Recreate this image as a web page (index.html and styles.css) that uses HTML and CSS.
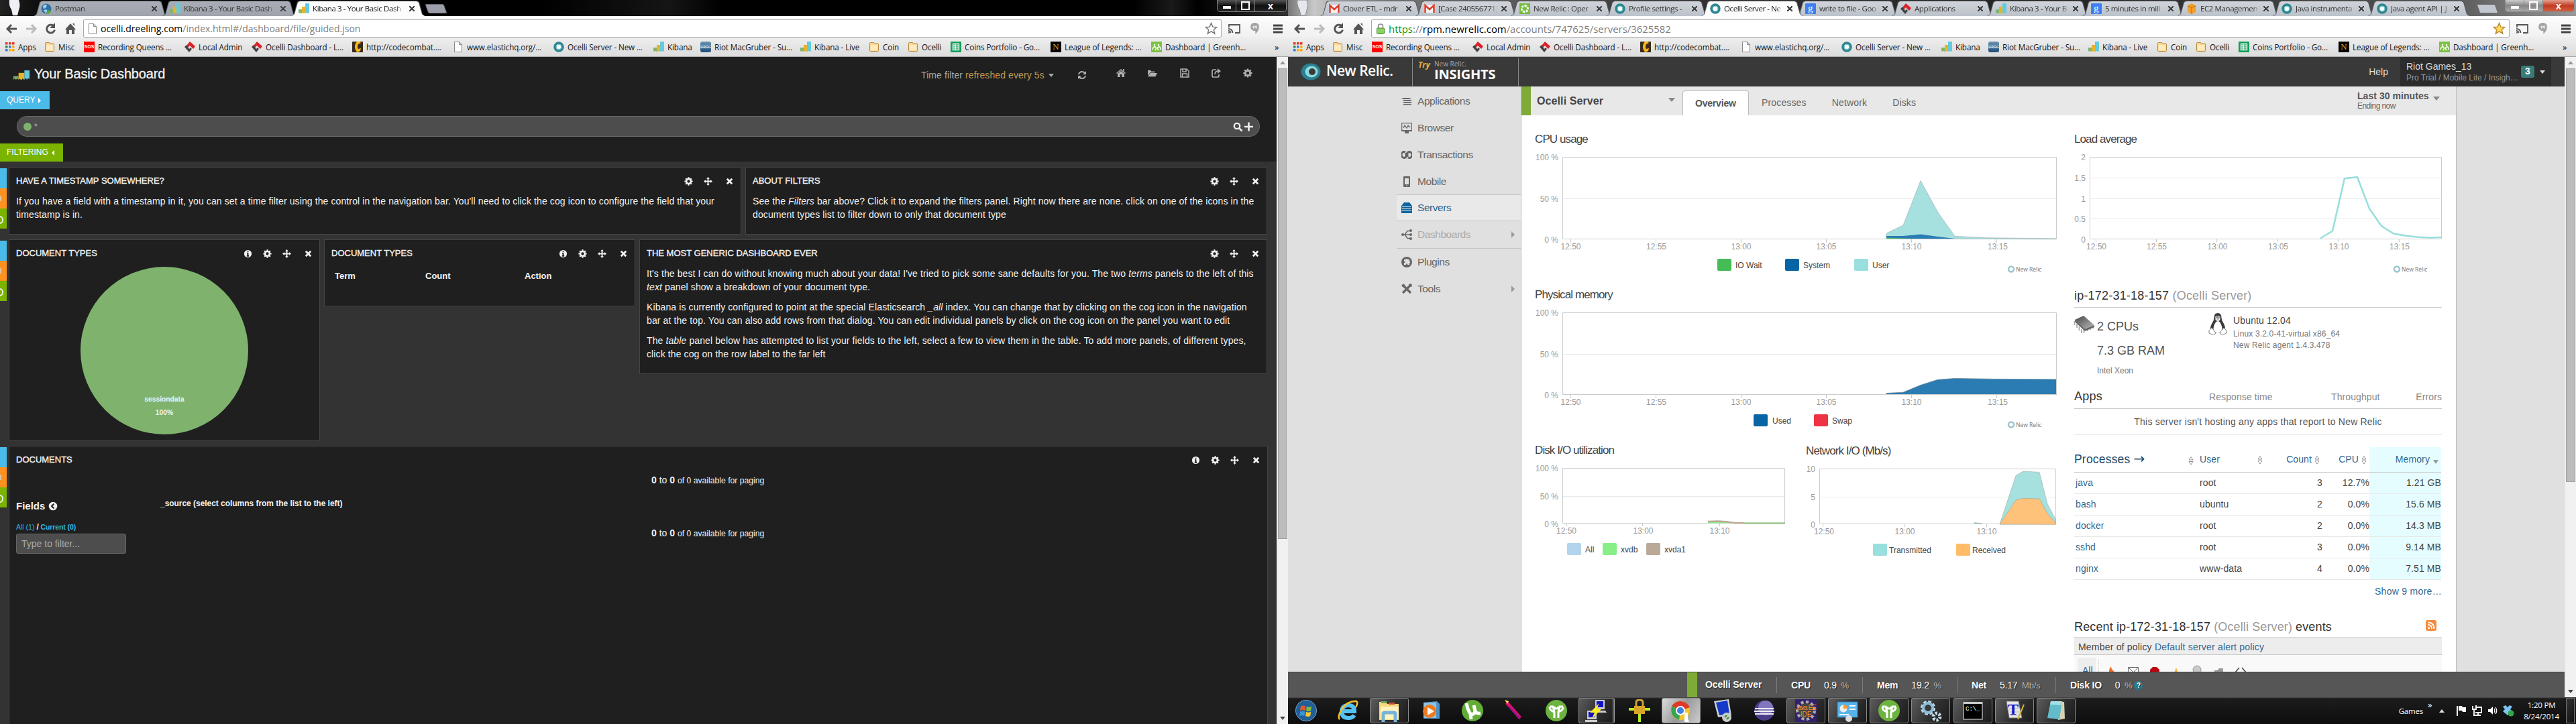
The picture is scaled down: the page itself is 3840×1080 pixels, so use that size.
FILE: index.html
```html
<!DOCTYPE html>
<html lang="en">
<head>
<meta charset="utf-8">
<title>Kibana 3 - Your Basic Dashboard</title>
<link rel="stylesheet" href="styles.css">
</head>
<body>
<svg class="sprite" aria-hidden="true">
  <symbol id="kibana" viewBox="0 0 16 16"><path fill="#7fb56b" d="M0 9h5v6l-2-1-1 1-1-1-1 1z"/><path fill="#e8b229" d="M5 5h5v10l-1-1-2 1-2-1z"/><path fill="#63cbe0" d="M10 0h6v14l-2 1-1-1-3 1z"/></symbol>
  <symbol id="folder" viewBox="0 0 16 16"><path fill="#fbd995" stroke="#b98a3c" d="M1.5 2.5q0-1 1-1h5l1 1.500h5q1 0 1 1v9.500q0 1-1 1h-11q-1 0-1-1z"/><path fill="#fdeac0" d="M3 5h10v8H3z"/></symbol>
  <symbol id="apps" viewBox="0 0 14 14"><path fill="#e33b2e" d="M0 0h3.500v3.500H0zM5 0h3.500v3.500H5zM10 0h3.500v3.500H10z"/><path fill="#2c8a4b" d="M0 5h3.500v3.500H0z"/><path fill="#2f7de1" d="M5 5h3.500v3.500H5zM0 10h3.500v3.500H0z"/><path fill="#f5ab1b" d="M10 5h3.500v3.500H10zM5 10h3.500v3.500H5zM10 10h3.500v3.500H10z"/></symbol>
  <symbol id="loggly" viewBox="0 0 16 16"><path fill="#d8232a" d="M8 0l8 7-3 4-5-5-3 3-2-3z"/><path fill="#444" d="M3 5l-3 3 7 8 4-5-2-2-2 2z"/></symbol>
  <symbol id="combat" viewBox="0 0 16 16"><rect width="16" height="16" rx="1" fill="#382a1d"/><path fill="#f9b517" d="M7 0h4l2 2-4 2q-2 4 0 7l4-1-1 4-4 2q-4-3-4-8 0-5 3-8z"/></symbol>
  <symbol id="page" viewBox="0 0 16 16"><path fill="#fff" stroke="#888" d="M2.500 .5h7l4 4v11h-11z"/><path fill="none" stroke="#888" d="M9.500 .5v4h4"/></symbol>
  <symbol id="ring" viewBox="0 0 16 16"><circle cx="8" cy="8" r="5.500" fill="#fff" stroke="#2d8592" stroke-width="4.500"/><circle cx="8" cy="8" r="4" fill="none" stroke="#8fd5d3"/></symbol>
  <symbol id="nrlogo" viewBox="0 0 30 26"><ellipse cx="15" cy="13" rx="14.500" ry="12.500" fill="#2a8092"/><ellipse cx="16" cy="13" rx="9.500" ry="8.500" fill="#8bdadb"/><ellipse cx="17" cy="13" rx="5" ry="5" fill="#393939"/></symbol>
  <symbol id="sheet" viewBox="0 0 16 16"><rect width="16" height="16" rx="1" fill="#0f9d58"/><path fill="none" stroke="#fff" stroke-width="1.300" d="M3.500 3.500h9v9h-9zM3.500 6.500h9M3.500 9.500h9M7 3.500v9"/></symbol>
  <symbol id="green" viewBox="0 0 16 16"><rect width="16" height="16" fill="#7cc243"/><circle cx="5" cy="5" r="1.300" fill="#fff"/><circle cx="11" cy="5" r="1.300" fill="#fff"/><path fill="none" stroke="#fff" stroke-width="1.500" d="M2 12q1-5 4-4t0 5M14 12q0-5-3-4t0 5"/></symbol>
  <symbol id="clover" viewBox="0 0 16 16"><rect width="16" height="16" fill="#76bd3e"/><path fill="none" stroke="#fff" stroke-width="3" stroke-dasharray="3 1.500" d="M8 3.500a4.500 4.500 0 1 1-.1 0z"/></symbol>
  <symbol id="gmail" viewBox="0 0 16 16"><path fill="#f2f2f2" d="M0 2h16v12H0z"/><path fill="none" stroke="#dc3b2d" stroke-width="2.500" d="M1.500 14V3l6.500 6 6.500-6v11"/></symbol>
  <symbol id="google" viewBox="0 0 16 16"><rect width="16" height="16" rx="1" fill="#3d7ef0"/><text x="4" y="12" font-family="Liberation Serif,serif" font-size="15" fill="#fff">g</text></symbol>
  <symbol id="aws" viewBox="0 0 16 16"><path fill="#f3a02d" d="M8 0l6 3v10l-6 3-6-3V3z"/><path stroke="#b56f10" d="M8 5v11M2 4l6 2 6-2" fill="none"/></symbol>
  <symbol id="globe" viewBox="0 0 16 16"><circle cx="8" cy="8" r="7.500" fill="#2f6fa3"/><path fill="#9bd0ef" d="M3 4q4-4 6-1l-2 4-3 1zM4 10l4-1 2 3-3 3z"/><path fill="#4ea736" d="M10 9l5 3-4 4-3-2z"/></symbol>
  <symbol id="lock" viewBox="0 0 16 16"><path fill="none" stroke="#888" stroke-width="1.500" d="M4.500 8V4q0-3 3.500-3t3.500 3v4"/><rect x="2.500" y="7" width="11" height="8.500" rx="1" fill="#8ed066" stroke="#3f8a26"/></symbol>
  <symbol id="cast" viewBox="0 0 20 16"><path fill="none" stroke="#555" stroke-width="1.800" d="M2 6V2h16v12h-7M1 8q6 0 6.500 6M1 11q3 0 3.500 3"/><circle cx="2" cy="14" r="1" fill="#555"/></symbol>
  <symbol id="hang" viewBox="0 0 16 20"><path fill="#a2a2a2" d="M8 0q7 0 7 7 0 6-6 12v-5Q1 13 1 7q0-7 7-7z"/><path fill="#eee" d="M4.500 5h3v4l-2 1V8h-1zM8.500 5h3v4l-2 1V8h-1z"/></symbol>
  <symbol id="cog" viewBox="0 0 14 14"><circle cx="7" cy="7" r="3.700" fill="none" stroke="currentColor" stroke-width="2.800"/><path stroke="currentColor" stroke-width="2.300" d="M7 .4v2.200M7 11.400v2.200M.4 7h2.200M11.400 7h2.200M2.300 2.300l1.600 1.600M10.100 10.100l1.600 1.600M2.300 11.700l1.600-1.600M10.100 3.900l1.600-1.600"/></symbol>
  <symbol id="move" viewBox="0 0 14 14"><path fill="currentColor" d="M7 0l2.600 3H8v3h3V4.400L14 7l-3 2.600V8H8v3h1.600L7 14l-2.600-3H6V8H3v1.600L0 7l3-2.600V6h3V3H4.400z"/></symbol>
  <symbol id="close" viewBox="0 0 14 14"><path stroke="currentColor" stroke-width="3" d="M3 3l8 8M11 3l-8 8"/></symbol>
  <symbol id="info" viewBox="0 0 14 14"><circle cx="7" cy="7" r="6" fill="currentColor"/><path stroke="#1f1f1f" stroke-width="2" d="M7 3v1.700M7 5.800V11M5.500 6.300H7M5.200 10.500h3.600"/></symbol>
  <symbol id="sort" viewBox="0 0 8 14"><path fill="#fff" stroke="#888" stroke-width=".9" d="M1 6L4 1.500 7 6zM1 8.500L4 13l3-4.500z"/></symbol>
  <symbol id="fork" viewBox="0 0 32 34"><circle cx="16" cy="17" r="16" fill="#6cb33f"/><path fill="none" stroke="#fff" stroke-width="3" d="M6 11h5l2 8v9M26 11h-5l-2 8v9M6 12q0 5 7 7M26 12q0 5-7 7M13 11q0 3 3 3t3-3"/></symbol>
</svg>

<div class="window left">
  <div class="titlebar">
    <svg class="ghost" viewBox="0 0 30 24"><path fill="#eef0f4" d="M14 0h14q3 8 0 15l-2 8h-7l-2-9q-4-5-3-14z"/></svg>
    <div class="tab"><svg><use href="#globe"/></svg><span>Postman</span><i></i></div>
    <div class="tab"><svg><use href="#kibana"/></svg><span>Kibana 3 - Your Basic Dash</span><i></i></div>
    <div class="tab active"><svg><use href="#kibana"/></svg><span>Kibana 3 - Your Basic Dash</span><i></i></div>
    <div class="newtab"></div>
    <div class="winbtns"><b class="min"></b><b class="max"></b><b class="x">x</b></div>
  </div>
  <div class="toolbar">
    <svg class="navicons" viewBox="0 0 124 32"><g fill="none" stroke="#555" stroke-width="3"><path d="M25 19H12M17 13l-6 6 6 6"/><path stroke="#bbb" d="M39 19h13M47 13l6 6-6 6"/><path d="M80.500 15.500a6 6 0 1 0 1 5"/></g><path fill="#555" d="M82 10v8h-8zM105 11l8 9h-2v7h-4v-6h-4v6h-4v-7h-2zM108 11h3v4z"/></svg>
    <div class="omni"><svg class="site"><use href="#page"/></svg><span class="url"><b>ocelli.dreeling.com</b>/index.html#/dashboard/file/guided.json</span><svg class="star" viewBox="0 0 20 20"><path fill="#fff" stroke="#777" stroke-width="1.500" d="M10 1.500l2.500 6 6 .5-4.500 4 1.500 6-5.500-3.500L4.500 18 6 12 1.500 8l6-.5z"/></svg></div>
    <svg class="ext cast"><use href="#cast"/></svg><svg class="ext hang"><use href="#hang"/></svg><svg class="menu" viewBox="0 0 14 14"><path stroke="#444" stroke-width="3" d="M0 2h14M0 7h14M0 12h14"/></svg>
  </div>
  <div class="bookmarks">
    <span><svg><use href="#apps"/></svg>Apps</span><span><svg><use href="#folder"/></svg>Misc</span><span><em class="sos">SOS</em>Recording Queens ...</span><span><svg><use href="#loggly"/></svg>Local Admin</span><span><svg><use href="#loggly"/></svg>Ocelli Dashboard - L...</span><span><svg><use href="#combat"/></svg>http://codecombat....</span><span><svg><use href="#page"/></svg>www.elastichq.org/...</span><span><svg><use href="#ring"/></svg>Ocelli Server - New ...</span><span><svg><use href="#kibana"/></svg>Kibana</span><span><em class="grgg">GRGG</em>Riot MacGruber - Su...</span><span><svg><use href="#kibana"/></svg>Kibana - Live</span><span><svg><use href="#folder"/></svg>Coin</span><span><svg><use href="#folder"/></svg>Ocelli</span><span><svg><use href="#sheet"/></svg>Coins Portfolio - Go...</span><span><em class="lol">N</em>League of Legends: ...</span><span><svg><use href="#green"/></svg>Dashboard | Greenh...</span><span>»</span>
  </div>
  <div class="page">
    <div class="kibana">
      <header class="khead">
        <svg class="klogo" viewBox="0 0 26 16" preserveAspectRatio="none"><path fill="#7aa86a" d="M0 9h8v6l-2-2-2 2-2-2-2 2z"/><path fill="#e8b229" d="M8 4h9v11l-3-2-2 3-2-3-2 2z"/><path fill="#63cbe0" d="M17 0h8v14l-2-2-2 3-2-3-2 3z"/></svg>
        <h1>Your Basic Dashboard</h1>
        <div class="time">Time filter <span>refreshed every 5s</span><i class="caret"></i></div>
        <div class="knav">
          <svg viewBox="0 0 14 14"><path fill="none" stroke="currentColor" stroke-width="2" d="M2 6q1-4 5-4 3 0 4 2M12 8q-1 4-5 4-3 0-4-2"/><path fill="currentColor" d="M13 1v5H8zM1 13V8h5z"/></svg>
          <svg viewBox="0 0 14 14"><path fill="currentColor" d="M7 1l7 6-1 1-6-5-6 5-1-1zM10 1h2v4l-2-2zM7 4l5 4v5H8.500V9h-3v4H2V8z"/></svg>
          <svg viewBox="0 0 16 14"><path fill="currentColor" d="M0 11V2h5l1 2h6v2H4zM4 7h12l-3 6H0z"/></svg>
          <svg viewBox="0 0 14 14"><path fill="none" stroke="currentColor" stroke-width="1.500" d="M1 1h9l3 3v9H1zM4 1v4h5V1M3.500 13V8h7v5"/></svg>
          <svg viewBox="0 0 14 14"><path fill="none" stroke="currentColor" stroke-width="1.700" d="M7 2H3Q1 2 1 4v7q0 2 2 2h6q2 0 2-2V9M5 9q0-5 5-5"/><path fill="currentColor" d="M9 0l5 4-5 4z"/></svg>
          <svg><use href="#cog"/></svg>
        </div>
      </header>
      <div class="flag query">QUERY <i></i></div>
      <div class="qinput"><b></b><span>*</span><svg viewBox="0 0 32 14"><circle cx="6" cy="6" r="4.200" fill="none" stroke="#eee" stroke-width="2.300"/><path stroke="#eee" stroke-width="2.600" d="M9 9l4.500 4.500M17 7h13M23.500 .5v13"/></svg></div>
      <div class="flag filtering">FILTERING <i></i></div>
      <div class="krows">
        <section class="krow r1">
          <div class="marks"><b></b><b></b><b></b></div>
          <div class="panel p1"><h2>HAVE A TIMESTAMP SOMEWHERE?<span><svg><use href="#cog"/></svg><svg><use href="#move"/></svg><svg><use href="#close"/></svg></span></h2><p>If you have a field with a timestamp in it, you can set a time filter using the control in the navigation bar. You'll need to click the cog icon to configure the field that your<br>timestamp is in.</p></div>
          <div class="panel p2"><h2>ABOUT FILTERS<span><svg><use href="#cog"/></svg><svg><use href="#move"/></svg><svg><use href="#close"/></svg></span></h2><p>See the <em>Filters</em> bar above? Click it to expand the filters panel. Right now there are none. click on one of the icons in the<br>document types list to filter down to only that document type</p></div>
        </section>
        <section class="krow r2">
          <div class="marks"><b></b><b></b><b></b></div>
          <div class="panel pie"><h2>DOCUMENT TYPES<span><svg><use href="#info"/></svg><svg><use href="#cog"/></svg><svg><use href="#move"/></svg><svg><use href="#close"/></svg></span></h2><div class="disc">sessiondata<br>100%</div></div>
          <div class="panel terms"><h2>DOCUMENT TYPES<span><svg><use href="#info"/></svg><svg><use href="#cog"/></svg><svg><use href="#move"/></svg><svg><use href="#close"/></svg></span></h2><div class="cols"><b>Term</b><b>Count</b><b>Action</b></div></div>
          <div class="panel generic"><h2>THE MOST GENERIC DASHBOARD EVER<span><svg><use href="#cog"/></svg><svg><use href="#move"/></svg><svg><use href="#close"/></svg></span></h2>
            <p>It's the best I can do without knowing much about your data! I've tried to pick some sane defaults for you. The two <em>terms</em> panels to the left of this<br><em>text</em> panel show a breakdown of your document type.</p>
            <p>Kibana is currently configured to point at the special Elasticsearch <em>_all</em> index. You can change that by clicking on the cog icon in the navigation<br>bar at the top. You can also add rows from that dialog. You can edit individual panels by click on the cog icon on the panel you want to edit</p>
            <p>The <em>table</em> panel below has attempted to list your fields to the left, select a few to view them in the table. To add more panels, of different types,<br>click the cog on the row label to the far left</p></div>
        </section>
        <section class="krow r3">
          <div class="marks"><b></b><b></b><b></b></div>
          <div class="panel docs"><h2>DOCUMENTS<span><svg><use href="#info"/></svg><svg><use href="#cog"/></svg><svg><use href="#move"/></svg><svg><use href="#close"/></svg></span></h2>
            <div class="docgrid">
              <div class="fields"><h3>Fields <svg viewBox="0 0 14 14"><circle cx="7" cy="7" r="6.300" fill="#f2f2f2"/><path fill="none" stroke="#1f1f1f" stroke-width="2" d="M8.500 3.500L5 7l3.500 3.500"/></svg></h3><div class="allcur"><a>All (1)</a> / <a><b>Current (0)</b></a></div><div class="filter">Type to filter...</div></div>
              <div class="doctable"><div class="paging"><b>0</b> to <b>0</b> <small>of 0 available for paging</small></div><div class="source">_source (select columns from the list to the left)</div><div class="paging"><b>0</b> to <b>0</b> <small>of 0 available for paging</small></div></div>
            </div>
          </div>
        </section>
      </div>
    </div>
    <div class="scroll"><i class="up"></i><b></b><i class="down"></i></div>
  </div>
</div>

<div class="window right">
  <div class="titlebar">
    <svg class="ghost" viewBox="0 0 30 24"><path fill="#e4e8ee" stroke="#888" d="M14 0h14q3 8 0 15l-2 8h-7l-2-9q-4-5-3-14z"/></svg>
    <div class="tab"><svg><use href="#gmail"/></svg><span>Clover ETL - mdr</span><i></i></div>
    <div class="tab"><svg><use href="#gmail"/></svg><span>[Case 240556771]</span><i></i></div>
    <div class="tab"><svg><use href="#clover"/></svg><span>New Relic : Oper</span><i></i></div>
    <div class="tab"><svg><use href="#ring"/></svg><span>Profile settings -</span><i></i></div>
    <div class="tab active"><svg><use href="#ring"/></svg><span>Ocelli Server - Ne</span><i></i></div>
    <div class="tab"><svg><use href="#google"/></svg><span>write to file - Goo</span><i></i></div>
    <div class="tab"><svg><use href="#loggly"/></svg><span>Applications</span><i></i></div>
    <div class="tab"><svg><use href="#kibana"/></svg><span>Kibana 3 - Your B</span><i></i></div>
    <div class="tab"><svg><use href="#google"/></svg><span>5 minutes in mill</span><i></i></div>
    <div class="tab"><svg><use href="#aws"/></svg><span>EC2 Managemen</span><i></i></div>
    <div class="tab"><svg><use href="#ring"/></svg><span>Java instrumenta</span><i></i></div>
    <div class="tab"><svg><use href="#ring"/></svg><span>Java agent API | J</span><i></i></div>
    <div class="newtab"></div>
    <div class="winbtns"><b class="min"></b><b class="max"></b><b class="x">x</b></div>
  </div>
  <div class="toolbar">
    <svg class="navicons" viewBox="0 0 124 32"><g fill="none" stroke="#555" stroke-width="3"><path d="M25 19H12M17 13l-6 6 6 6"/><path stroke="#bbb" d="M39 19h13M47 13l6 6-6 6"/><path d="M80.500 15.500a6 6 0 1 0 1 5"/></g><path fill="#555" d="M82 10v8h-8zM105 11l8 9h-2v7h-4v-6h-4v6h-4v-7h-2zM108 11h3v4z"/></svg>
    <div class="omni"><svg class="site"><use href="#lock"/></svg><span class="url"><u>https</u>://<b>rpm.newrelic.com</b>/accounts/747625/servers/3625582</span><svg class="star" viewBox="0 0 20 20"><path fill="#ffd95e" stroke="#b98a2c" stroke-width="1.500" d="M10 1.500l2.500 6 6 .5-4.500 4 1.500 6-5.500-3.500L4.500 18 6 12 1.500 8l6-.5z"/></svg></div>
    <svg class="ext cast"><use href="#cast"/></svg><svg class="ext hang"><use href="#hang"/></svg><svg class="menu" viewBox="0 0 14 14"><path stroke="#444" stroke-width="3" d="M0 2h14M0 7h14M0 12h14"/></svg>
  </div>
  <div class="bookmarks">
    <span><svg><use href="#apps"/></svg>Apps</span><span><svg><use href="#folder"/></svg>Misc</span><span><em class="sos">SOS</em>Recording Queens ...</span><span><svg><use href="#loggly"/></svg>Local Admin</span><span><svg><use href="#loggly"/></svg>Ocelli Dashboard - L...</span><span><svg><use href="#combat"/></svg>http://codecombat....</span><span><svg><use href="#page"/></svg>www.elastichq.org/...</span><span><svg><use href="#ring"/></svg>Ocelli Server - New ...</span><span><svg><use href="#kibana"/></svg>Kibana</span><span><em class="grgg">GRGG</em>Riot MacGruber - Su...</span><span><svg><use href="#kibana"/></svg>Kibana - Live</span><span><svg><use href="#folder"/></svg>Coin</span><span><svg><use href="#folder"/></svg>Ocelli</span><span><svg><use href="#sheet"/></svg>Coins Portfolio - Go...</span><span><em class="lol">N</em>League of Legends: ...</span><span><svg><use href="#green"/></svg>Dashboard | Greenh...</span><span>»</span>
  </div>
  <div class="page">
    <div class="relic">
      <header class="nrhead">
        <svg class="nrlogo"><use href="#nrlogo"/></svg><strong>New Relic.</strong>
        <div class="insights"><em>Try</em><div><small>New Relic.</small><b>INSIGHTS</b></div></div>
        <span class="help">Help</span>
        <div class="account"><div>Riot Games_13<small>Pro Trial / Mobile Lite / Insigh…</small></div><b>3</b><i class="caret"></i></div>
      </header>
      <div class="nrbody">
        <nav class="side">
          <a><svg viewBox="0 0 16 16"><path fill="#666" d="M0 3h12l3 2H3zM2 6h13v1.700H4zM2 9h13v1.700H4zM2 12h13v1.500H4z"/></svg>Applications</a>
          <a><svg viewBox="0 0 16 16"><path fill="none" stroke="#666" stroke-width="1.200" d="M.7.7h14.600v11H.7zM3 8l2-4 3 4 2-4 3 3"/><path fill="#666" d="M0 11h16v2h-5v3H5v-3H0z"/></svg>Browser</a>
          <a><svg viewBox="0 0 16 16"><g fill="none" stroke="#666" stroke-width="3"><path d="M6 4a4 4.500 0 1 0 1 7V5M10 12a4 4.500 0 1 0-1-7v6"/></g></svg>Transactions</a>
          <a><svg viewBox="0 0 16 16"><path fill="#666" fill-rule="evenodd" d="M4 0h8q1 0 1 1v14q0 1-1 1H4q-1 0-1-1V1q0-1 1-1zM5 3v9h6V3zM7 13.500h2v1H7z"/></svg>Mobile</a>
          <a class="on"><svg viewBox="0 0 16 16"><path fill="#0c639f" d="M4 0h8l4 5v11H0V5z"/><path stroke="#e8e8e8" d="M1 6.500h14M1 9.500h14M1 12.500h14"/></svg>Servers</a>
          <a class="dash"><svg viewBox="0 0 16 16"><path fill="none" stroke="#666" stroke-width="1.500" d="M3 8h10M5 8l4-5.500h4M5 8l4 5.500h4"/><g fill="#666"><circle cx="2" cy="8" r="2"/><circle cx="14" cy="2" r="2"/><circle cx="14" cy="8" r="2"/><circle cx="14" cy="14" r="2"/></g></svg>Dashboards<i></i></a>
          <a><svg viewBox="0 0 16 16"><circle cx="8" cy="8" r="8" fill="#666"/><path fill="#e0e0e0" d="M4 4h3V3h2v1h3v3h1v2h-1v3H9v-1.500H7V12H4V9h1.500V7H4z"/></svg>Plugins</a>
          <a><svg viewBox="0 0 16 16"><path stroke="#666" stroke-width="3.200" d="M2 14L13 3M3 3l11 11"/><path fill="#666" d="M0 3l3-3 3 3-3 3zM11 1l3-1 2 2-1 3-4-1z"/></svg>Tools<i></i></a>
        </nav>
        <main>
          <div class="subhead"><h1>Ocelli Server<i></i></h1><a class="on">Overview</a><a>Processes</a><a>Network</a><a>Disks</a><div class="range"><b>Last 30 minutes<i></i></b>Ending now</div></div>
          <div class="content">
            <div class="charts">
              <h2>CPU usage</h2>
              <svg class="chart" width="812" height="210" viewBox="2268 219 812 210">
                <path class="grid" d="M2330 296.500h735"/><path class="box" d="M2329.500 234.500h736v122h-736zM2341.500 357v5M2468.500 357v5M2595.500 357v5M2722.500 357v5M2849.500 357v5M2976.500 357v5"/>
                <path fill="#a6e0df" stroke="#a5b5b5" stroke-width=".7" d="M2812 356V348l25-12 26-66.500 26 47.500 25 35.300 47 2.500 104 1v1z"/><path fill="#2a7cb3" d="M2812 356v-4h25l26-2.500 26 3.500 25 3z"/><path fill="#45bc57" d="M2812 356v-1.500l40 1.500z"/>
                <g class="y"><text x="2323" y="239">100 %</text><text x="2323" y="301">50 %</text><text x="2323" y="361.500">0 %</text></g>
                <g class="x"><text x="2341.500" y="372">12:50</text><text x="2469" y="372">12:55</text><text x="2595.500" y="372">13:00</text><text x="2722.500" y="372">13:05</text><text x="2849.500" y="372">13:10</text><text x="2978" y="372">13:15</text></g>
                <g class="leg"><rect x="2560" y="386" width="21" height="18" rx="2" fill="#45bc57"/><text x="2587" y="399.500">IO Wait</text><rect x="2661" y="386" width="21" height="18" rx="2" fill="#0865a5"/><text x="2688" y="399.500">System</text><rect x="2764" y="386" width="21" height="18" rx="2" fill="#99dfdd"/><text x="2791" y="399.500">User</text></g>
                <circle class="wm" cx="2998" cy="401.500" r="4"/><text class="wmt" x="3005" y="405">New Relic</text>
              </svg>
              <h2>Physical memory</h2>
              <svg class="chart" width="812" height="210" viewBox="2268 451 812 210">
                <path class="grid" d="M2330 528.500h735"/><path fill="#2a7cb3" stroke="#64808f" stroke-width=".7" d="M2812 588.500v-2l25-1.300 26-10.800 25-8 26-2 60 1 91.500.5v22.600z"/><path class="box" d="M2329.500 466.500h736v122h-736zM2341.500 589v5M2468.500 589v5M2595.500 589v5M2722.500 589v5M2849.500 589v5M2976.500 589v5"/>
                <g class="y"><text x="2323" y="471">100 %</text><text x="2323" y="533">50 %</text><text x="2323" y="593.500">0 %</text></g>
                <g class="x"><text x="2341.500" y="604">12:50</text><text x="2469" y="604">12:55</text><text x="2595.500" y="604">13:00</text><text x="2722.500" y="604">13:05</text><text x="2849.500" y="604">13:10</text><text x="2978" y="604">13:15</text></g>
                <g class="leg"><rect x="2614" y="618" width="21" height="18" rx="2" fill="#0865a5"/><text x="2642" y="631.500">Used</text><rect x="2704" y="618" width="21" height="18" rx="2" fill="#ee3344"/><text x="2731" y="631.500">Swap</text></g>
                <circle class="wm" cx="2998" cy="633.500" r="4"/><text class="wmt" x="3005" y="637">New Relic</text>
              </svg>
              <div class="pair">
                <div><h2>Disk I/O utilization</h2>
                <svg class="chart" width="412" height="160" viewBox="2268 683 412 160">
                  <path class="grid" d="M2330 740.500h331"/><path class="box" d="M2329.500 698.500h331v82h-331zM2335.500 781v4M2448.500 781v4M2563.500 781v4"/><path fill="#88ee88" d="M2546 780.500v-2h15l20 1.200h80v.8z"/><path fill="none" stroke="#bba998" stroke-width="2.500" d="M2546 778l15-.5 12 .8 14 2h12"/><path stroke="#8bb97c" stroke-width="2" d="M2599 780.500h62"/>
                  <g class="y"><text x="2323" y="703">100 %</text><text x="2323" y="745">50 %</text><text x="2323" y="785.500">0 %</text></g>
                  <g class="x"><text x="2335" y="796">12:50</text><text x="2449.500" y="796">13:00</text><text x="2563.500" y="796">13:10</text></g>
                  <g class="leg"><rect x="2336" y="810" width="21" height="18" rx="2" fill="#b2d4ec"/><text x="2363" y="823.500">All</text><rect x="2389" y="810" width="21" height="18" rx="2" fill="#88ee88"/><text x="2416" y="823.500">xvdb</text><rect x="2454" y="810" width="21" height="18" rx="2" fill="#bba998"/><text x="2481" y="823.500">xvda1</text></g>
                </svg></div>
                <div class="net"><h2>Network I/O (Mb/s)</h2>
                <svg class="chart" width="400" height="160" viewBox="2680 683 400 160">
                  <path class="grid" d="M2713 741.500h351"/><path class="box" d="M2712.500 699.500h352v82h-352zM2717.500 782v4M2839.500 782v4M2961.500 782v4"/><path fill="#a6e0df" stroke="#9fb5b5" stroke-width=".7" d="M2981 782l24-72.500 11-6.500 24 1.400 12 47 12.500 24v6zM2943 781v-1.500l12 1.500z"/><path fill="#ffc27a" stroke="#a8a890" stroke-width=".7" d="M2981 782l24-36 11-2.700 24 .7 12 22.300 12.500 14v2z"/>
                  <g class="y"><text x="2706" y="704">10</text><text x="2706" y="746">5</text><text x="2706" y="786.500">0</text></g>
                  <g class="x"><text x="2719" y="797">12:50</text><text x="2839.500" y="797">13:00</text><text x="2961.500" y="797">13:10</text></g>
                  <g class="leg"><rect x="2792" y="811" width="21" height="18" rx="2" fill="#99dfdd"/><text x="2816" y="824.500">Transmitted</text><rect x="2916" y="811" width="21" height="18" rx="2" fill="#ffbb66"/><text x="2940" y="824.500">Received</text></g>
                </svg></div>
              </div>
            </div>
            <div class="info">
              <h2>Load average</h2>
              <svg class="chart load" width="581" height="211" viewBox="3080 219 581 211">
                <path class="grid" d="M3116 265.500h523M3116 296.500h523M3116 326.500h523"/><path class="box" d="M3115.500 234.500h524v122h-524zM3124.500 357v4M3214.500 357v4M3304.500 357v4M3395.500 357v4M3485.500 357v4M3576.500 357v4"/>
                <path fill="none" stroke="#99dfdd" stroke-width="2.600" d="M3459 355.500l18-11 18-78.300 19-2 18 47 18 26 18 11.400 18 3 19 2.200 17 .7 17.500-.5"/>
                <g class="y"><text x="3109" y="239">2</text><text x="3109" y="270">1.5</text><text x="3109" y="301">1</text><text x="3109" y="331">0.5</text><text x="3109" y="361.500">0</text></g>
                <g class="x"><text x="3125" y="372">12:50</text><text x="3215" y="372">12:55</text><text x="3305.500" y="372">13:00</text><text x="3396" y="372">13:05</text><text x="3486.500" y="372">13:10</text><text x="3577" y="372">13:15</text></g>
                <circle class="wm" cx="3573" cy="401.500" r="4"/><text class="wmt" x="3580" y="405">New Relic</text>
              </svg>
              <h3 class="host">ip-172-31-18-157 <span>(Ocelli Server)</span></h3>
              <div class="specs">
                <svg class="chip" viewBox="0 0 34 30"><defs><linearGradient id="die" x1="0" y1="0" x2="1" y2="1"><stop offset="0" stop-color="#444"/><stop offset="1" stop-color="#bbb"/></linearGradient></defs><path stroke="#aaa" stroke-width="1.800" d="M2.500 10v6M6 14v6M9.500 18v6M13 22v6M16.500 22v6M22 22v3M26 20v3M30 18v3"/><path fill="#666" d="M3 8v3l15 14 14-6v-3L18 21z"/><path fill="url(#die)" d="M3 8L16 2l16 14-14 6z"/></svg>
                <div class="cpu">2 CPUs<br>7.3 GB RAM<small>Intel Xeon</small></div>
                <svg class="tux" viewBox="0 0 28 33"><path fill="#3a3a3a" d="M14 0q5.500 0 5.500 7 0 4 3 8 4 7 2 11l-5 4h-11l-5-4q-2-4 2-11 3-4 3-8Q8.500 0 14 0z"/><path fill="#fff" d="M14 12q3 0 5 5 3 7 0 11-5 4-10 0-3-4 0-11 2-5 5-5zM10.500 5q1.500-2 3 0 1.500-2 4 0v5q-3 4-7 0z"/><path fill="#333" d="M12 5h1.500v2H12zM15 5h1.500v2H15z"/><path fill="#aaa" d="M11 8.500l3-1.500 3 1.500-3 2z"/><path fill="#fff" stroke="#888" d="M1 26l4-4 5 6 .5 3-3 1.500L.800 30zM27 26l-4-4-5 6-.5 3 3 1.500 6.700-2.500z"/></svg>
                <div class="os">Ubuntu 12.04<small>Linux 3.2.0-41-virtual x86_64</small><small>New Relic agent 1.4.3.478</small></div>
              </div>
              <div class="apps"><h3>Apps</h3><span>Response time</span><span>Throughput</span><span>Errors</span></div>
              <div class="noapps">This server isn't hosting any apps that report to New Relic</div>
              <table>
                <tr><th><h3>Processes <b>→</b></h3><svg><use href="#sort"/></svg></th><th>User<svg class="far"><use href="#sort"/></svg></th><th>Count<svg><use href="#sort"/></svg></th><th>CPU<svg><use href="#sort"/></svg></th><th>Memory<i></i></th></tr>
                <tr><td>java</td><td>root</td><td>3</td><td>12.7%</td><td>1.21 GB</td></tr>
                <tr><td>bash</td><td>ubuntu</td><td>2</td><td>0.0%</td><td>15.6 MB</td></tr>
                <tr><td>docker</td><td>root</td><td>2</td><td>0.0%</td><td>14.3 MB</td></tr>
                <tr><td>sshd</td><td>root</td><td>3</td><td>0.0%</td><td>9.14 MB</td></tr>
                <tr><td>nginx</td><td>www-data</td><td>4</td><td>0.0%</td><td>7.51 MB</td></tr>
              </table>
              <div class="more">Show 9 more…</div>
              <h3 class="recent">Recent ip-172-31-18-157 <span>(Ocelli Server)</span> events<svg viewBox="0 0 16 16"><rect width="16" height="16" rx="3" fill="#f58a3c"/><g fill="none" stroke="#fff" stroke-width="1.800"><path d="M3 7q6 0 6 6M3 3.500q9.500 0 9.500 9.500"/></g><circle cx="4.500" cy="11.700" r="1.500" fill="#fff"/></svg></h3>
              <div class="policy">Member of policy <a>Default server alert policy</a></div>
              <div class="events"><b>All</b>
                <svg viewBox="0 0 220 32"><path fill="none" stroke="#ccc" stroke-dasharray="2 2" d="M.5 5v27"/><path fill="#ee6a2c" d="M14 32q-2-6 2-9 0-5 3-8 0 4 3 6 4 4 2 11z"/><path fill="#fff" stroke="#666" d="M44.500 16.500h15v15h-15zM45 17l7 7 7-7"/><path fill="#bb0011" d="M77 32V20l4-4h6l4 4v12z"/><path fill="#ffb43c" d="M110 32l6-15 6 15z"/><circle cx="147" cy="20" r="6" fill="#c9c9c9" stroke="#999"/><circle cx="152" cy="27" r="5" fill="#a9cbd8"/><path fill="#999" d="M173 21h4l3-3h6v10h-6l-3-3h-4z"/><path fill="none" stroke="#444" stroke-width="1.500" d="M210 17l-6 7 6 7M214 17l6 7-6 7"/></svg>
              </div>
            </div>
          </div>
        </main>
      </div>
      <footer class="status"><b class="st-name">Ocelli Server</b><span><b>CPU</b>0.9 <i>%</i></span><span><b>Mem</b>19.2 <i>%</i></span><span><b>Net</b>5.17 <i>Mb/s</i></span><span><b>Disk IO</b>0 <i>%</i><em>?</em></span></footer>
    </div>
    <div class="scroll"><i class="up"></i><b></b><i class="down"></i></div>
  </div>
  <div class="taskbar">
    <div class="task"><svg viewBox="0 0 38 36"><circle cx="19" cy="18" r="17.500" fill="#1f5f96" stroke="#7fa9c9"/><path fill="#e4582d" d="M10 11q4-3 8 0l-1 7q-4-2-8 0z"/><path fill="#85b93a" d="M20 11q4 2 8 0l-1 7q-4 2-8 0z"/><path fill="#3b93d8" d="M9 20q4-2 8 0l-1 7q-4-2-8 0z"/><path fill="#f9c72e" d="M19 20q4 2 8 0l-1 7q-4 2-8 0z"/></svg></div>
    <div class="task"><svg viewBox="0 0 32 34"><path fill="none" stroke="#55c2f4" stroke-width="6" d="M7 18h19q0-9-9-9t-10 9q0 10 10 10 6 0 9-4"/><path fill="none" stroke="#f5c12e" stroke-width="2.500" d="M4 30Q0 26 8 14T29 3q3 2-1 9"/></svg></div>
    <div class="task btn"><svg viewBox="0 0 34 34"><path fill="#f5d77c" d="M2 4h10l2 3h17v24H2z"/><path fill="#fff2bd" d="M4 11h27v19H4z"/><path fill="#6fa95b" d="M5 3h8v3H5z"/><path fill="#cf4c34" d="M16 5h9v3h-9z"/><path fill="none" stroke="#76b4d8" stroke-width="5" d="M8 34V22q0-2 2-2h14q2 0 2 2v12"/></svg></div>
    <div class="task"><svg viewBox="0 0 32 34"><path fill="#4c93c5" d="M5 5l20-2 4 4v22H5z"/><path fill="#8fc3e6" d="M5 5h19v23H5z"/><circle cx="14" cy="18" r="10" fill="#ee7a20"/><path fill="#fff" d="M11 12l10 6-10 6z"/></svg></div>
    <div class="task"><svg viewBox="0 0 32 34"><circle cx="16" cy="17" r="16" fill="#62ad36"/><path fill="none" stroke="#fff" stroke-width="5" d="M7 6q1 8 5 15M12 21q6 4 8-3l-2-9M20 18q2 4 8 3M13 22l1 8"/></svg></div>
    <div class="task"><svg viewBox="0 0 32 34"><path stroke="#e0106a" stroke-width="5" d="M5 5l20 23"/><path stroke="#7a1a9a" stroke-width="2" d="M8 11l17 18"/><path fill="#f5e54a" d="M2 1l6 2-2 4z"/></svg></div>
    <div class="task"><svg><use href="#fork"/></svg></div>
    <div class="task btn short"><svg viewBox="0 0 34 34"><path fill="#ccc" d="M16 1h14v14H16zM4 17h14v13H4zM14 17h17l2 3H14zM1 31h18v3H1z"/><path fill="#1212c8" d="M18 3h10v9H18zM6 19h9v8H6z"/><path fill="#ffee22" d="M22 6L8 20h7l-4 9 14-14h-7z"/></svg></div>
    <div class="task"><svg viewBox="0 0 32 34"><path stroke="#b4ee2b" stroke-width="4" d="M0 15h32M16 20v14"/><path fill="none" stroke="#caa23a" stroke-width="3" d="M11 11V5q0-4 5-4t5 4v6"/><path fill="#d9a528" d="M8 10h16v12H8z"/></svg></div>
    <div class="task btn bright"><svg viewBox="0 0 32 34"><circle cx="15" cy="17" r="14" fill="#f3c42e"/><path fill="#db3b2d" d="M15 17L2 10Q8 2 16 3q9 1 13 9z"/><path fill="#3aa450" d="M15 17L2 10q-3 12 5 18l6 3z"/><circle cx="15" cy="17" r="6" fill="#3f82e0" stroke="#fff" stroke-width="2"/><path fill="#fff" d="M21 20h5v9l2 5h-7z"/></svg></div>
    <div class="task"><svg viewBox="0 0 32 34"><path fill="#c9ced3" d="M3 3l22-3 4 24-20 3z"/><path fill="#1638c8" d="M6 5l17-3 3 20-15 2z"/><circle cx="22" cy="27" r="7" fill="#c9ccc9"/><path fill="none" stroke="#2d8c2d" stroke-width="2" d="M19 27l3-3M22 30l3-3"/></svg></div>
    <div class="task"><svg viewBox="0 0 32 34"><circle cx="16" cy="17" r="15" fill="#4d3c8a"/><circle cx="18" cy="13" r="11" fill="#8276bd"/><path stroke="#eee" stroke-width="2" d="M2 14h28M1 18h30M2 22h28"/></svg></div>
    <div class="task btn"><svg viewBox="0 0 34 34"><path fill="#33206b" d="M1 0h32v34H1z"/><circle cx="17" cy="17" r="12" fill="none" stroke="#aaa" stroke-width="6" stroke-dasharray="4 3"/><circle cx="17" cy="17" r="11" fill="#444"/><text x="17" y="16" text-anchor="middle" font-size="10" font-family="Liberation Sans,sans-serif" fill="#ff8a2b" textLength="32">Java EE</text><text x="17" y="26" text-anchor="middle" font-size="10" font-family="Liberation Sans,sans-serif" fill="#ff8a2b">IDE</text></svg></div>
    <div class="task btn"><svg viewBox="0 0 34 34"><path fill="#58b3e8" stroke="#2478b5" d="M2 4h30v23H2z"/><circle cx="11" cy="14" r="5.500" fill="#eee"/><path fill="#f39c2d" d="M11 8v6h6q0-6-6-6z"/><path stroke="#fff" stroke-width="2" d="M20 10h9M20 15h9M5 23h14"/><circle cx="19" cy="29" r="5" fill="#ddd"/></svg></div>
    <div class="task btn"><svg><use href="#fork"/></svg></div>
    <div class="task btn"><svg viewBox="0 0 34 34"><circle cx="13" cy="13" r="8" fill="none" stroke="#b9dcf0" stroke-width="6" stroke-dasharray="4 2.280"/><circle cx="13" cy="13" r="7" fill="none" stroke="#8fbcd6" stroke-width="4"/><circle cx="26" cy="26" r="5" fill="none" stroke="#c7dfec" stroke-width="5" stroke-dasharray="3 2.200"/></svg></div>
    <div class="task btn"><svg viewBox="0 0 34 34"><path fill="#000" stroke="#aaa" stroke-width="1.500" d="M3 5h28v25H3z"/><path fill="#ccc" d="M3 4h28v3H3z"/><text x="6" y="17" font-family="Liberation Mono,monospace" font-size="9" fill="#fff">C:\_</text></svg></div>
    <div class="task btn"><svg viewBox="0 0 34 34"><path fill="#e7e7e7" stroke="#777" d="M5 3h18l5 25H9z"/><path stroke="#bbb" d="M8 9h16M9 14h16M10 19h16M11 24h15"/><text x="7" y="23" font-family="Liberation Serif,serif" font-weight="bold" font-size="24" fill="#1515cc">T</text><path stroke="#d8b228" stroke-width="2" d="M31 8L22 30"/></svg></div>
    <div class="task btn"><svg viewBox="0 0 34 34"><path fill="#d9d2b0" d="M11 3l18 1 1 25-10 2z"/><path fill="#62bccb" d="M9 3h17l-4 27-18-2z"/><path fill="#a6dee4" d="M9 3h17l-1 6-17-1z"/></svg></div>
    <div class="tray"><span>Games</span><sup>»</sup><i></i>
      <svg viewBox="0 0 90 18"><path fill="#fff" d="M3 2h2v15H3zM6 2h5l1 2h5v7h-5l-1-2H6z"/><path fill="none" stroke="#fff" stroke-width="1.800" d="M31 4h9v8h-9M32 1v6h-5v-5M29 8v8h10M35 12v4"/><path fill="#fff" d="M50 7h3l4-4v12l-4-4h-3z"/><path fill="none" stroke="#fff" stroke-width="1.300" d="M59 6q2 3 0 6M61 4q3.500 5 0 10"/><path fill="#7cc4f2" d="M72 3l4-2 3 3 3-3 4 2-3 4 3 3-7 6-7-6 3-3z"/><circle cx="84" cy="13" r="4.500" fill="#2fa84a"/></svg>
      <div class="clock">1:20 PM<br>8/24/2014</div><b></b></div>
  </div>
</div>
</body>
</html>
```
FILE: styles.css
```css
* { box-sizing: border-box; }
body { margin: 0; width: 3840px; height: 1080px; display: flex; overflow: hidden; background: #000; font-family: "Liberation Sans", Arial, sans-serif; }
h1, h2, h3, p { margin: 0; font-weight: normal; }
.sprite { position: absolute; width: 0; height: 0; }
.window { width: 1920px; height: 1080px; display: flex; flex-direction: column; overflow: hidden; }

/* browser chrome */
.titlebar { height: 24px; flex: none; display: flex; align-items: flex-end; font: 11.5px/20px "Open Sans", sans-serif; background: linear-gradient(90deg, #222, #000 5%, #000 42%, #151515 52%, #000 56%, #000 88%, #1a1a1a 91%, #000 93%, #333); }
.right .titlebar { background: linear-gradient(90deg, #777 0, #c8c8c8 2%, #777 8%, #333 30%, #222 60%, #555 90%, #999); }
.ghost { width: 30px; height: 24px; flex: none; }
.tab { position: relative; z-index: 0; height: 23px; display: flex; align-items: center; flex: none; background: #55585c; color: #333; clip-path: polygon(0 100%, 4px 88%, 9px 8%, 12px 0, calc(100% - 12px) 0, calc(100% - 9px) 8%, calc(100% - 4px) 88%, 100% 100%); }
.tab::before { content: ""; position: absolute; z-index: -1; inset: 1px 1px 0; background: linear-gradient(#a9adb6, #9fa3ab); clip-path: polygon(0 100%, 4px 88%, 9px 8%, 12px 0, calc(100% - 12px) 0, calc(100% - 9px) 8%, calc(100% - 4px) 88%, 100% 100%); }
.right .tab::before { background: linear-gradient(#d0d4da, #bcc2ca); }
.tab.active, .right .tab.active { z-index: 1; color: #111; }
.window .tab.active::before { background: #fcfcfc; }
.tab svg { width: 16px; height: 16px; flex: none; }
.tab span { flex: 1; min-width: 0; overflow: hidden; white-space: nowrap; margin-left: 5px; mask-image: linear-gradient(90deg, #000 88%, transparent); letter-spacing: -.4px; }
.tab i { width: 8px; height: 8px; flex: none; margin: 1px 16px 0 6px; background: linear-gradient(45deg, transparent 40%, #444 40% 60%, transparent 60%), linear-gradient(-45deg, transparent 40%, #444 40% 60%, transparent 60%); }
.left .tab { width: 200px; padding-left: 11px; margin-right: -8px; }
.right .tab { width: 152px; padding-left: 13px; margin-right: -10px; }
.left .ghost { margin-right: 20px; }
.right .ghost { margin-right: 18px; }
.newtab { width: 28px; height: 14px; margin: 0 0 4px 10px; background: #9a9faa; border: 1px solid #666; border-radius: 2px; transform: skewX(20deg); }
.right .newtab { margin-left: 22px; background: #c3c8d0; }
.winbtns { height: 18px; display: flex; align-self: flex-start; margin-left: auto; margin-right: 2px; border: 1px solid #888; border-top: 0; border-radius: 0 0 5px 5px; overflow: hidden; color: #fff; }
.winbtns b { width: 28px; height: 17px; border-right: 1px solid #888; background: linear-gradient(#555, #111 50%, #222); display: flex; align-items: center; justify-content: center; font: bold 15px/14px "Liberation Sans", sans-serif; }
.winbtns .x { width: 46px; border: 0; }
.right .winbtns b { background: linear-gradient(#ccc, #888 50%, #aaa); }
.right .winbtns .x { background: linear-gradient(#e3a08f, #c23b22 50%, #d5603f); }
.min::before { content: ""; width: 12px; height: 4px; margin-top: 4px; background: #fff; }
.max::before { content: ""; width: 9px; height: 9px; border: 2px solid #fff; }
.toolbar { height: 32px; flex: none; display: flex; align-items: center; background: linear-gradient(#fdfdfd, #f0f0f0); }
.navicons { width: 124px; height: 32px; }
.omni { width: 1697px; height: 27px; margin-top: 5px; border: 1px solid #aaa; border-radius: 2px; background: #fff; display: flex; align-items: center; padding: 0 5px; }
.omni .site { width: 16px; height: 16px; }
.url { flex: 1; margin-left: 4px; font: 14px/20px "Open Sans", sans-serif; color: #808080; white-space: nowrap; }
.right .url { font-size: 14.900px; }
.url b { font-weight: normal; color: #000; }
.url u { text-decoration: none; color: #0a9a0a; }
.star { width: 19px; height: 19px; }
.ext { margin-top: 5px; }
.cast { width: 20px; height: 16px; margin-left: 9px; }
.hang { width: 15px; height: 18px; margin-left: 13px; }
.menu { width: 14px; height: 14px; margin: 5px 0 0 20px; }
.bookmarks { height: 29px; flex: none; display: flex; align-items: center; padding-left: 8px; background: linear-gradient(#eee, #dcdcdc); border-bottom: 1px solid #a5a5a5; font: 11.700px "Open Sans", sans-serif; letter-spacing: -.12px; color: #111; }
.bookmarks span { display: flex; align-items: center; flex: none; gap: 5px; white-space: nowrap; width: 150px; }
.bookmarks svg { width: 16px; height: 16px; flex: none; }
.bookmarks span:nth-child(1) { width: 58px; }
.bookmarks span:nth-child(1) svg { width: 14px; height: 14px; }
.bookmarks span:nth-child(2) { width: 59px; }
.bookmarks span:nth-child(4) { width: 100px; }
.bookmarks span:nth-child(7) { width: 150px; }
.bookmarks span:nth-child(8) { width: 149px; }
.bookmarks span:nth-child(9) { width: 70px; }
.bookmarks span:nth-child(10) { width: 149px; }
.bookmarks span:nth-child(11) { width: 102px; }
.bookmarks span:nth-child(12) { width: 58px; }
.bookmarks span:nth-child(13) { width: 64px; }
.bookmarks span:nth-child(14) { width: 149px; }
.bookmarks span:nth-child(16) { width: 184px; }
.bookmarks span:nth-child(17) { width: auto; font-size: 13px; }
.bookmarks em { font: bold 7px/16px "Liberation Sans", sans-serif; letter-spacing: 0; width: 16px; height: 16px; text-align: center; color: #fff; flex: none; }
.sos { background: #f00; }
.bookmarks .grgg { background: linear-gradient(#6a94b3, #1d4c76); border-radius: 3px; font-size: 5px; }
.bookmarks .lol { background: #000; color: #c9a437; font: 13px/16px "Liberation Serif", serif; }
.page { flex: 1; min-height: 0; display: flex; }
.scroll { width: 17px; background: #f1f1f1; display: flex; flex-direction: column; align-items: center; border-left: 1px solid #e4e4e4; }
.scroll b { width: 14px; height: 702px; background: #bcbcbc; border: 1px solid #a0a0a0; }
.right .scroll b { height: 617px; }
.scroll i { border: 4px solid transparent; border-top: 0; border-bottom: 5px solid #999; margin: 6px 0; }
.scroll .down { border-top: 5px solid #444; border-bottom: 0; margin-top: auto; }

/* kibana */
.kibana { width: 1903px; background: #1f1f1f; color: #f2f2f2; font-size: 14px; display: flex; flex-direction: column; }
.khead { height: 51px; flex: none; display: flex; align-items: center; padding-left: 20px; }
.klogo { width: 25px; height: 15px; margin: 3px 6px 0 0; }
.khead h1 { font-size: 20px; width: 1322px; letter-spacing: -.15px; -webkit-text-stroke: .3px; }
.time { color: #aaa; margin-top: 3px; letter-spacing: .1px; white-space: nowrap; width: 233px; display: flex; align-items: center; gap: 4px; }
.time span { color: #c09853; }
.caret { border: 4px solid transparent; border-top: 5px solid currentColor; border-bottom: 0; }
.time .caret { margin-left: 2px; }
.knav { display: flex; color: #b0b0b0; gap: 33.200px; }
.knav svg { width: 14px; height: 14px; flex: none; }
.knav svg:nth-child(1) { margin: 3px 11px 0 0; }
.flag { height: 27px; flex: none; font-size: 12px; line-height: 27px; padding-left: 10px; display: flex; align-items: center; gap: 5px; color: #fff; }
.query { width: 74px; background: #4bbce9; }
.flag i { border: 4px solid transparent; border-left-color: #fff; border-right: 0; }
.filtering { width: 94px; background: #7ab300; }
.filtering i { border: 4px solid transparent; border-right-color: #fff; border-left: 0; }
.qinput { margin: 10px 0 10px 25px; width: 1853px; height: 31px; flex: none; border: 1px solid #6a6a6a; border-radius: 15px; background: #4d4d4d; display: flex; align-items: center; padding: 0 7px 0 9px; font-size: 12px; color: #bbb; }
.qinput b { width: 12px; height: 12px; border-radius: 50%; background: #7eb26d; }
.qinput span { flex: 1; margin-left: 4px; }
.qinput svg { width: 32px; height: 14px; }
.krows { flex: 1; min-height: 0; background: #333; padding-top: 8px; display: flex; flex-direction: column; gap: 7px; overflow: hidden; }
.krow { display: flex; gap: 6px; align-items: flex-start; flex: none; }
.marks { width: 10px; margin: 2px -3px 0 0; }
.marks b { display: block; width: 10px; height: 30px; overflow: hidden; background: #4bbce9; }
.marks b:nth-child(2) { background: #ff921f; }
.marks b:nth-child(3) { background: #7ab300; }
.marks b:nth-child(3)::before { content: ""; display: block; width: 6px; height: 8px; margin: 11px 0 0 -5px; border: 2px solid #eee; border-radius: 50%; }
.marks b:nth-child(2)::before { content: ""; display: block; width: 2px; height: 8px; margin-top: 11px; background: #ddc8a8; }
.panel { background: #1f1f1f; border: 1px solid #444; padding: 10px 10px 19px; }
.p1 { width: 1092px; height: 101px; }
.p2 { width: 778px; height: 101px; }
.r2 { height: 301px; }
.pie { width: 464px; height: 301px; }
.terms { width: 464px; height: 100px; }
.generic { width: 936px; height: 201px; }
.docs { width: 1877px; height: 430px; }
.panel h2 { font-size: 13px; line-height: 20px; height: 20px; margin-bottom: 10px; display: flex; justify-content: space-between; -webkit-text-stroke: .35px; }
.panel h2 span { display: flex; align-items: center; gap: 16px; }
.panel h2 svg { width: 13px; height: 13px; margin-top: 1px; }
.panel h2 svg:last-child { margin-left: 3px; }
.panel p { line-height: 20px; letter-spacing: .11px; white-space: nowrap; margin-bottom: 10px; }
.disc { width: 250px; height: 250px; border-radius: 50%; background: #7eb26d; margin: 0 auto; padding-top: 188px; text-align: center; font: bold 10.300px/20px "Liberation Sans", sans-serif; }
.cols { display: flex; padding: 5px 5px; font-size: 13px; line-height: 18px; }
.cols b:nth-child(1) { width: 135px; }
.cols b:nth-child(2) { width: 148px; }
.docgrid { display: flex; }
.fields { width: 215px; padding-top: 39px; }
.fields h3 { font: bold 15px/20px "Liberation Sans", sans-serif; display: flex; align-items: center; gap: 5px; }
.fields h3 svg { width: 14px; height: 14px; }
.allcur { font: bold 12px/20px "Liberation Sans", sans-serif; margin-top: 11px; letter-spacing: -.3px; }
.allcur a { color: #33b5e5; font-size: 10.500px; font-weight: normal; letter-spacing: 0; }
.allcur b { letter-spacing: -.1px; }
.filter { width: 164px; height: 30px; border: 1px solid #666; border-radius: 3px; background: #4d4d4d; color: #aaa; padding-left: 7px; line-height: 28px; }
.paging { line-height: 20px; padding-left: 732px; }
.paging small { font-size: 12.200px; }
.source { font: bold 12px/18px "Liberation Sans", sans-serif; margin: 15px 0 25px; letter-spacing: -.04px; }

/* new relic */
.relic { width: 1903px; display: flex; flex-direction: column; background: #e0e0e0; }
.nrhead { height: 44px; flex: none; display: flex; align-items: center; background: #393939; color: #ddd; padding-left: 19px; font-size: 14px; }
.nrlogo { width: 30px; height: 26px; margin-right: 8px; }
.nrhead strong { font: 600 21px/28px "Open Sans", sans-serif; color: #fff; width: 128px; letter-spacing: -.5px; margin-top: -4px; }
.insights { width: 159px; height: 42px; border: solid #888; border-width: 0 1px; padding: 4px 8px; display: flex; }
.insights em { color: #eaaf3c; font: italic bold 12px/14px "Open Sans", sans-serif; width: 24px; }
.insights div { display: flex; flex-direction: column; gap: 1px; }
.insights small { font: 10px/11px "Open Sans", sans-serif; color: #aaa; }
.insights b { font: bold 20px/18px "Open Sans", sans-serif; color: #fff; letter-spacing: -.2px; }
.help { margin-left: auto; }
.account { width: 225px; height: 44px; margin: 0 20px 0 18px; background: #2c2c2c; display: flex; align-items: center; padding-left: 9px; line-height: 16px; color: #ddd; white-space: nowrap; }
.account div { width: 171px; }
.account small { display: block; font-size: 12px; color: #999; margin-top: 1px; }
.account b { width: 20px; height: 18px; border-radius: 3px; background: #387c79; color: #fff; text-align: center; margin-right: 8px; }
.nrbody { flex: 1; min-height: 0; display: flex; overflow: hidden; }
.side { width: 348px; padding: 2px 0 0 162px; border-right: 1px solid #bbb; flex: none; }
.side a { height: 40px; display: flex; align-items: center; padding-left: 7px; font-size: 15.500px; letter-spacing: -.45px; color: #666; }
.side svg { width: 16px; height: 16px; margin-right: 8px; }
.side .on { background: #e9e9e9; border: solid #c4c4c4; border-width: 1px 0; color: #2a6592; margin-top: -1px; height: 40px; }
.side .dash { color: #aaa; border-bottom: 1px solid #c4c4c4; height: 41px; }
.side i { margin: 0 9px 0 auto; border: 5px solid transparent; border-left: 5px solid #999; border-right: 0; }
main { width: 1394px; background: #fff; border-right: 1px solid #bbb; flex: none; height: 900px; }
.subhead { height: 43px; background: #e8e8e8; display: flex; align-items: flex-end; }
.subhead h1 { width: 240px; height: 43px; border-left: 14px solid #7eab37; padding-left: 9px; font: bold 16px/50px "Liberation Sans", sans-serif; color: #444; display: flex; justify-content: space-between; align-items: center; letter-spacing: .1px; }
.subhead i { border: 5px solid transparent; border-top: 6px solid #888; border-bottom: 0; }
.subhead h1 i { margin: -3px 11px 0 0; }
.subhead a { height: 37px; font-size: 14px; line-height: 36px; color: #666; padding: 0 19px; letter-spacing: .15px; }
.subhead .on { background: #fff; border: 1px solid #bbb; border-bottom: 0; border-radius: 4px 4px 0 0; font-weight: bold; width: 99px; padding: 0 18px; color: #555; letter-spacing: -.2px; }
.range { margin: 0 24px 0 auto; width: 123px; height: 37px; font-size: 12px; line-height: 15px; letter-spacing: -.6px; color: #666; }
.range b { display: flex; justify-content: space-between; align-items: center; font-size: 14px; line-height: 16px; letter-spacing: .05px; color: #555; }
.range i { margin-top: 7px; }
.content { display: flex; padding-top: 25px; }
.content h2 { height: 22px; line-height: 22px; font-size: 17px; letter-spacing: -.9px; color: #444; padding-left: 20px; }
.charts { width: 812px; }
.chart { display: block; font-size: 12px; }
.pair { display: flex; }
.pair .net h2 { padding-left: 12px; line-height: 24px; }
.box { fill: none; stroke: #ccc; }
.grid { stroke: #e8e8e8; }
.y { fill: #999; text-anchor: end; }
.x { fill: #999; text-anchor: middle; }
.leg { fill: #444; }
.wm { fill: #fff; stroke: #9cc6ce; stroke-width: 2.500px; }
.wmt { font: 8.500px "Open Sans", sans-serif; fill: #777; }
.info { width: 581px; padding: 0 21px 0 12px; font-size: 14px; color: #444; }
.info h2 { padding: 0; }
.load { margin-left: -12px; }
.info h3 { font-size: 18px; color: #333; letter-spacing: .2px; white-space: nowrap; }
.info h3 span { color: #999; }
.host { height: 29px; line-height: 22px; border-bottom: 1px solid #ccc; }
.specs { height: 115px; display: flex; color: #444; }
.chip { width: 34px; height: 30px; margin: 10px 2px 0 -2px; }
.cpu { width: 164px; font-size: 18px; line-height: 36px; padding-top: 10px; color: #555; }
.cpu small { display: block; font-size: 12px; line-height: 24px; color: #777; }
.tux { width: 28px; height: 33px; margin: 8px 9px 0 2px; }
.os { padding-top: 9px; line-height: 20px; letter-spacing: .15px; }
.os small { display: block; font-size: 12px; line-height: 17px; color: #777; position: relative; top: 2px; }
.apps { height: 36px; border-bottom: 1px solid #ccc; display: grid; grid-template-columns: 201px 182px 1fr auto; align-items: center; color: #888; letter-spacing: .1px; }
.noapps { height: 39px; line-height: 38px; text-align: center; border-bottom: 1px solid #e8e8e8; margin-bottom: 18px; color: #555; letter-spacing: .2px; width: 548px; }
table { border-collapse: collapse; table-layout: fixed; width: 547px; letter-spacing: .1px; }
th, td { height: 32px; padding: 0; font-weight: normal; text-align: right; border-bottom: 1px solid #e8e8e8; color: #444; white-space: nowrap; }
th { height: 37px; border-bottom: 1px solid #ccc; color: #2f6791; padding-right: 4px; }
th:nth-child(1) { width: 187px; text-align: left; }
th:nth-child(2) { width: 100px; text-align: left; }
th:nth-child(3) { width: 83px; }
th:nth-child(4) { width: 70px; }
th:nth-child(5) { width: 107px; padding-right: 2px; }
td:nth-child(-n+2) { text-align: left; }
td:nth-child(1) { color: #2f6791; padding-left: 2px; }
th:nth-child(5), td:nth-child(5) { background: #e6fdff; }
th svg { width: 8px; height: 14px; margin-left: 4px; vertical-align: -3px; }
th h3 { display: inline-block; width: 166px; }
.info th h3 { color: #1f4868; font-size: 17.500px; }
th h3 b { font: 20px/18px "DejaVu Sans", sans-serif; }
th .far { margin-left: 56px; }
th i { display: inline-block; margin: 0 2px 0 5px; border: 4px solid transparent; border-top: 6px solid #999; border-bottom: 0; vertical-align: -2px; }
.more { text-align: right; height: 55px; line-height: 35px; color: #2f6791; letter-spacing: .3px; }
.recent { height: 30px; line-height: 26px; display: flex; gap: 5px; align-items: center; }
.info .recent { letter-spacing: .13px; }
.recent svg { width: 16px; height: 16px; margin: 0 8px 4px auto; }
.policy { height: 27px; background: #ededed; border: solid #ccc; border-width: 1px 0; padding-left: 6px; line-height: 28px; letter-spacing: .2px; }
.policy a { color: #2f6791; }
.events { height: 60px; background: #f9f9f9; display: flex; padding: 4px 0 0 5px; }
.events b { font-weight: normal; width: 27px; height: 40px; background: #ededed; color: #2f6791; padding: 11px 0 0 7px; }
.events svg { width: 220px; height: 32px; margin: -2px 0 0 4px; }
.status { height: 38px; flex: none; display: flex; align-items: center; background: #565656; border-top: 1px solid #444; color: #fff; font-size: 14px; padding-left: 595px; width: 1903px; text-shadow: 1px 1px 1px #222; z-index: 1; }
.status .st-name { border-left: 15px solid #7eab37; line-height: 37px; padding: 0 20px 0 12px; width: 133px; white-space: nowrap; letter-spacing: -.1px; }
.status span { height: 24px; line-height: 24px; border-left: 1px solid #7c7c7c; padding-left: 21px; width: 128px; white-space: nowrap; letter-spacing: -.2px; }
.status span:nth-child(3) { width: 141px; }
.status span:nth-child(4) { width: 147px; }
.status span:nth-child(5) { width: 164px; }
.status span b { margin-right: 20px; }
.status i { font-style: normal; color: #bbb; margin-left: 3px; font-size: 13px; }
.status em { display: inline-block; width: 13px; height: 13px; border-radius: 50%; background: #257e95; font: bold 10px/13px "Liberation Sans", sans-serif; text-align: center; margin-left: 3px; vertical-align: 1px; }

/* windows taskbar */
.taskbar { height: 40px; flex: none; display: flex; background: linear-gradient(#555 0, #1c1c1c 2px, #0d0d0f); align-items: stretch; }
.task { width: 58px; margin-right: 4.100px; display: flex; align-items: center; justify-content: center; flex: none; }
.task:first-child { margin-left: -2px; }
.task svg { width: 34px; height: 34px; }
.btn { margin-top: 1px; height: 38px; border: 1px solid #8a8a8a; border-radius: 3px; background: linear-gradient(120deg, #5c5c5c, #333 50%, #1b1b1b); }
.short { width: 54px; margin-right: 8.100px; border-right: 3px double #999; }
.bright { background: linear-gradient(120deg, #ddd, #999 50%, #ccc); }
.tray { margin-left: auto; display: flex; align-items: center; color: #fff; font: 11.500px "Open Sans", sans-serif; letter-spacing: -.2px; }
.tray sup { margin: -18px 0 0 7px; width: 17px; font-size: 13px; }
.tray i { border: 4px solid transparent; border-bottom: 5px solid #ddd; border-top: 0; margin-right: 15px; }
.tray svg { width: 90px; height: 18px; }
.clock { width: 71px; margin-left: 4px; text-align: center; line-height: 17px; }
.tray b { width: 13px; height: 38px; border: 1px solid #777; margin: 0 2px 0 1px; background: linear-gradient(120deg, #333, #111); }
```
